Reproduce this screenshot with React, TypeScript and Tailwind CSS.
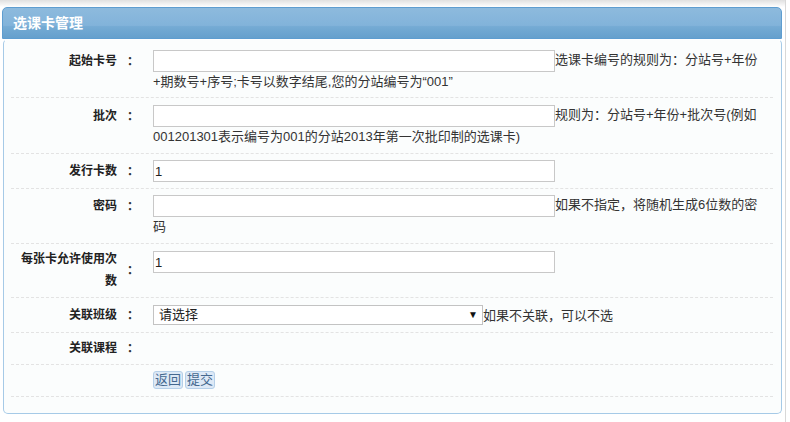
import type { ReactNode } from "react";
import clsx from "clsx";

function Label({ text, h = "h-[22px]" }: { text: string; h?: string }) {
  return (
    <div className={clsx("flex w-[126px] shrink-0 items-center", h)}>
      <span className="w-[106px] text-right text-[12px] font-bold leading-[22px] text-[#222]">{text}</span>
      {/* TC face centres the full-width colon like the original */}
      <span className="ml-[7px] w-[12px] font-['Noto_Sans_CJK_TC',sans-serif] text-[12px] font-bold leading-[22px] text-[#333]">
        ：
      </span>
    </div>
  );
}

function Row({ className, children }: { className?: string; children: ReactNode }) {
  return (
    <div className={clsx("flex items-start border-b border-dashed border-[#e3e3e3] pr-[10px]", className)}>
      {children}
    </div>
  );
}

function Value({ className, children }: { className?: string; children?: ReactNode }) {
  return (
    <div className={clsx("ml-[16px] w-[610px] text-[13px] leading-[19px] text-[#333]", className)}>{children}</div>
  );
}

function TextInput({ value }: { value?: string }) {
  return (
    <input
      defaultValue={value}
      className="h-[22px] w-[402px] border border-[#c8c8c8] bg-white px-[1px] align-middle text-[13px] text-[#222] outline-none"
    />
  );
}

export default function App() {
  return (
    <div className="h-[422px] w-[790px] bg-white font-['Liberation_Sans','Noto_Sans_CJK_SC',sans-serif]">
      <div className="h-[422px] w-[786px] border-r border-[#d8d8d8]">
        {/* faint top shadow */}
        <div className="h-[7px] bg-gradient-to-b from-[#e0e0e0] to-white" />

        {/* title bar */}
        <div className="ml-[2px] flex h-[32px] w-[780px] items-center rounded-t-[5px] border border-[#5e9dd0] bg-[linear-gradient(#8dbadd,#82b3da_58%,#75abd4_62%,#66a0cd)] pl-[10px]">
          <span className="text-[14px] font-bold text-white">选课卡管理</span>
        </div>

        {/* form panel */}
        <div className="ml-[3px] w-[779px] rounded-[5px] border border-[#a6cae7] border-t-white bg-[#fbfdfd] pb-[16px] pl-[7px] pr-[8px]">
          <Row className="pb-[6px] pt-[10px]">
            <Label text="起始卡号" />
            <Value>
              <TextInput />
              选课卡编号的规则为：分站号+年份+期数号+序号;卡号以数字结尾,您的分站编号为“001”
            </Value>
          </Row>

          <Row className="pb-[7px] pt-[7px]">
            <Label text="批次" />
            <Value>
              <TextInput />
              规则为：分站号+年份+批次号(例如001201301表示编号为001的分站2013年第一次批印制的选课卡)
            </Value>
          </Row>

          <Row className="pb-[6px] pt-[6px]">
            <Label text="发行卡数" />
            <Value>
              <TextInput value="1" />
            </Value>
          </Row>

          <Row className="pb-[7px] pt-[6px]">
            <Label text="密码" />
            <Value>
              <TextInput />
              如果不指定，将随机生成6位数的密码
            </Value>
          </Row>

          <Row className="pb-[5px] pt-[4px]">
            <Label text="每张卡允许使用次数" h="h-[44px]" />
            <Value className="mt-[3px]">
              <TextInput value="1" />
            </Value>
          </Row>

          <Row className="pb-[7px] pt-[7px]">
            <Label text="关联班级" h="h-[20px]" />
            <Value className="flex items-center">
              <div className="relative">
                <select className="h-[20px] w-[330px] appearance-none border border-[#c3c3c3] bg-white pl-[5px] text-[13px] leading-[18px] text-[#222] outline-none">
                  <option>请选择</option>
                </select>
                <span className="pointer-events-none absolute right-[5px] top-[4px] text-[10px] leading-[12px] text-[#111]">▼</span>
              </div>
              <span>如果不关联，可以不选</span>
            </Value>
          </Row>

          <Row className="pb-[5px] pt-[4px]">
            <Label text="关联课程" />
            <Value />
          </Row>

          <Row className="pb-[7px] pt-[6px]">
            <div className="w-[126px] shrink-0" />
            <Value className="flex gap-[2px]">
              <button className="h-[18px] w-[30px] rounded-[3px] border border-[#b5cfe8] bg-[#dde9f6] text-[13px] leading-[16px] text-[#44688f]">
                返回
              </button>
              <button className="h-[18px] w-[30px] rounded-[3px] border border-[#b5cfe8] bg-[#dde9f6] text-[13px] leading-[16px] text-[#44688f]">
                提交
              </button>
            </Value>
          </Row>
        </div>
      </div>
    </div>
  );
}
